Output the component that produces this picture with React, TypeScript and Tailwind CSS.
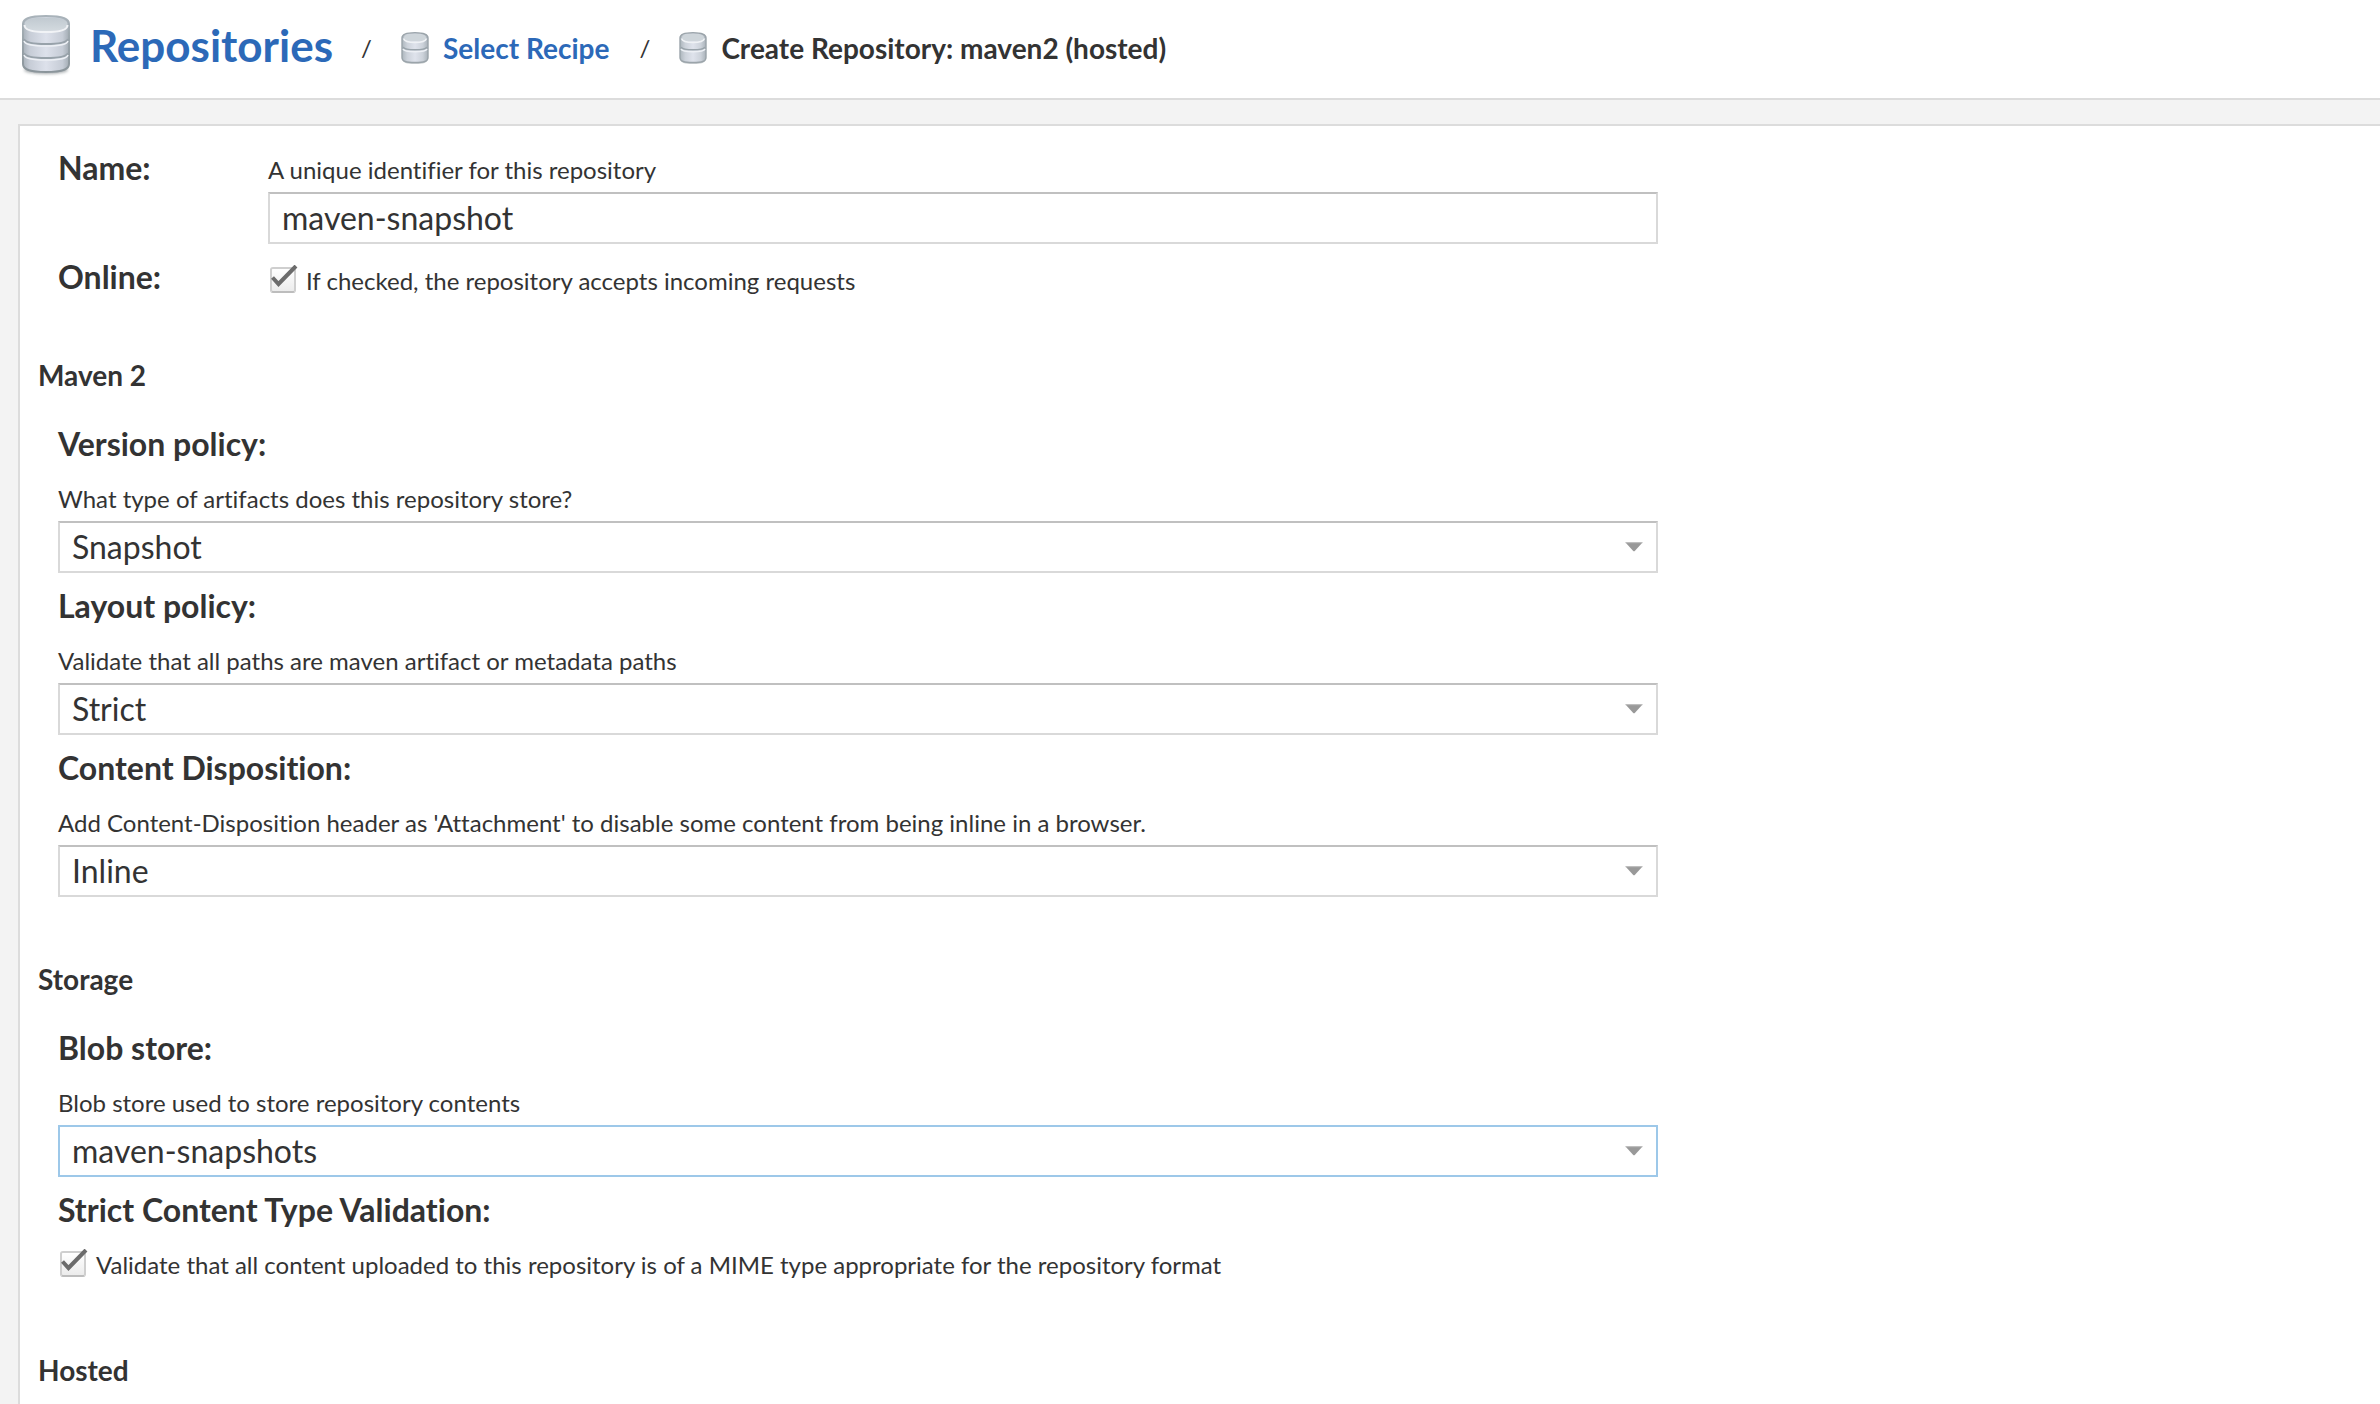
import React, { useState, type ReactNode } from "react";

function DatabaseLarge() {
  return (
    <svg viewBox="0 0 56 64" className="h-16 w-14 shrink-0" aria-hidden="true">
      <defs>
        <linearGradient id="dl-body" x1="0" x2="1" y1="0" y2="0">
          <stop offset="0" stopColor="#a9b2bb" />
          <stop offset="0.14" stopColor="#c6ccd6" />
          <stop offset="0.5" stopColor="#dde1eb" />
          <stop offset="0.86" stopColor="#c6ccd6" />
          <stop offset="1" stopColor="#a3acb4" />
        </linearGradient>
        <linearGradient id="dl-top" x1="0" x2="0" y1="0" y2="1">
          <stop offset="0" stopColor="#c0c9d0" />
          <stop offset="1" stopColor="#d3dadf" />
        </linearGradient>
        <linearGradient id="dl-edge" x1="0" x2="0" y1="0" y2="1">
          <stop offset="0" stopColor="#a9b3ba" />
          <stop offset="1" stopColor="#8b959b" />
        </linearGradient>
        <filter id="dl-blur" x="-20%" y="-100%" width="140%" height="300%">
          <feGaussianBlur stdDeviation="1.5" />
        </filter>
      </defs>
      <ellipse cx="28" cy="57" rx="22" ry="4" fill="#6f777c" opacity="0.6" filter="url(#dl-blur)" />
      <path d="M5 11c0-5 5-8 23-8s23 3 23 8v40c0 5-5 8-23 8S5 56 5 51z" fill="url(#dl-body)" stroke="url(#dl-edge)" strokeWidth="2" />
      <path d="M6.500 11c0-4 6-6.500 21.500-6.500S49.500 7 49.500 11s-6 7-21.500 7S6.500 15 6.500 11z" fill="url(#dl-top)" />
      <path d="M6.500 12c0 4.500 8 7 21.500 7s21.500-2.500 21.500-7" fill="none" stroke="#f1f3f6" strokeWidth="2" />
      <path d="M6 26c1 3.500 9 5 22 5s21-1.500 22-5M6 40c1 3.500 9 5 22 5s21-1.500 22-5" fill="none" stroke="#98a2aa" strokeWidth="2" />
      <path d="M6 28c1 3.500 9 5 22 5s21-1.500 22-5M6 42c1 3.500 9 5 22 5s21-1.500 22-5" fill="none" stroke="#edf0f5" strokeWidth="1.500" />
    </svg>
  );
}

function DatabaseSmall() {
  return (
    <svg viewBox="0 0 32 32" className="h-8 w-8 shrink-0" aria-hidden="true">
      <defs>
        <linearGradient id="ds-body" x1="0" x2="1" y1="0" y2="0">
          <stop offset="0" stopColor="#adb6bd" />
          <stop offset="0.2" stopColor="#ccd2da" />
          <stop offset="0.5" stopColor="#dfe3ec" />
          <stop offset="0.8" stopColor="#ccd2da" />
          <stop offset="1" stopColor="#a9b2b9" />
        </linearGradient>
      </defs>
      <path d="M3 26c0 5 5 6 13 6s13-1 13-6z" fill="#9aa3a8" opacity="0.5" />
      <path d="M3 6c0-4 4-5.300 13-5.300S29 2 29 6v19.500c0 4-4 5-13 5s-13-1-13-5z" fill="url(#ds-body)" stroke="#9ba4aa" strokeWidth="1.400" />
      <path d="M5 5.500C5 3 9 2 16 2s11 1 11 3.500S23 9 16 9 5 8 5 5.500z" fill="#ced5da" />
      <path d="M4.500 6.500C5.500 9.500 10 10.500 16 10.500s10.500-1 11.500-4" fill="none" stroke="#eff2f5" strokeWidth="1.600" />
      <path d="M4 15c1 2 6 2.800 12 2.800s11-.8 12-2.800" fill="none" stroke="#99a3aa" strokeWidth="1.600" />
      <path d="M4 17c1 2 6 2.800 12 2.800s11-.8 12-2.800" fill="none" stroke="#edf0f5" strokeWidth="1.600" />
    </svg>
  );
}

function Separator() {
  return <span className="w-2 text-2xl leading-8" aria-hidden="true">/</span>;
}

const labelClass = "text-[32px] leading-[42px] font-bold";
const helpClass = "text-2xl leading-8";
const boxClass =
  "block h-[52px] w-full rounded-none border-2 bg-white px-3 text-[32px] outline-none";
const restBorder = "border-[#d9d9d9] border-t-[#c0c0c0]";
const activeBorder = "border-[#9dc8e9]";

type SelectFieldProps = {
  id: string;
  label: string;
  help: string;
  options: string[];
  active?: boolean;
};

function SelectField({ id, label, help, options, active = false }: SelectFieldProps) {
  const [value, setValue] = useState(options[0]);
  return (
    <div>
      <label htmlFor={id} className={`block ${labelClass}`}>{label}</label>
      <p id={`${id}-help`} className={`mt-[18px] ${helpClass}`}>{help}</p>
      <div className="relative mt-1.5">
        <select
          id={id}
          aria-describedby={`${id}-help`}
          value={value}
          onChange={(e) => setValue(e.target.value)}
          className={`appearance-none ${boxClass} leading-[44px] ${active ? activeBorder : restBorder}`}
        >
          {options.map((o) => (
            <option key={o}>{o}</option>
          ))}
        </select>
        <svg viewBox="0 0 18 10" className="pointer-events-none absolute top-[21px] right-[15px] h-2.5 w-[18px]" aria-hidden="true">
          <path d="M0.500 0.500h17L10 8.800q-1 1-2 0z" fill="#999" />
          <path d="M0.500 0.700h17" stroke="#bbb" strokeWidth="1" />
        </svg>
      </div>
    </div>
  );
}

function CheckField({ id, children }: { id: string; children: ReactNode }) {
  const [checked, setChecked] = useState(true);
  return (
    <div className="flex items-start gap-2">
      <span className="relative block h-[30px] w-[30px] shrink-0">
        <input
          id={id}
          type="checkbox"
          checked={checked}
          onChange={(e) => setChecked(e.target.checked)}
          className="mt-0.5 ml-0.5 block size-[26px] appearance-none rounded-[3px] border-2 border-[#cfcfcf] border-b-[#bdbdbd] bg-linear-to-b from-white to-[#ececec]"
        />
        {checked && (
          <svg viewBox="0 0 30 30" className="pointer-events-none absolute inset-0 size-[30px]" aria-hidden="true">
            <path d="M4.500 12.500l6 6.500L28 1" fill="none" stroke="#6c6c6c" strokeWidth="4" />
          </svg>
        )}
      </span>
      <label htmlFor={id} className={helpClass}>{children}</label>
    </div>
  );
}

function SectionTitle({ children }: { children: ReactNode }) {
  return <h2 className="text-[28px] leading-[38px] font-bold">{children}</h2>;
}

export default function App() {
  const [name, setName] = useState("maven-snapshot");
  return (
    <div className="flex min-h-screen flex-col bg-[#f3f3f3] font-['Lato',sans-serif] text-[#333] [font-variant-ligatures:none]">
      <header className="border-b-2 border-[#dcdcdc] bg-white">
        <nav aria-label="Breadcrumb" className="flex h-[98px] items-center pb-2 pl-[18px]">
          <a href="#repositories" className="flex items-center gap-4 text-[#2c69b8]">
            <DatabaseLarge />
            <span className="text-[44px] leading-[54px] font-bold">Repositories</span>
          </a>
          <div className="flex items-center gap-[30px] pt-1.5 pl-7">
            <Separator />
            <a href="#recipe" className="flex items-center gap-3 text-[28px] leading-8 font-bold text-[#2c69b8]">
              <DatabaseSmall />
              Select Recipe
            </a>
            <Separator />
            <h1 className="flex items-center gap-3 text-[28px] leading-8 font-bold">
              <DatabaseSmall />
              Create Repository: maven2 (hosted)
            </h1>
          </div>
        </nav>
      </header>

      <main className="mt-6 ml-[18px] flex-1 border-t-2 border-l-2 border-[#dcdcdc] bg-white pt-[21px] pl-[18px]">
        <form className="max-w-[1620px]" onSubmit={(e) => e.preventDefault()}>
          <div className="grid grid-cols-[210px_1fr] gap-y-3 pl-5">
            <label htmlFor="name" className={labelClass}>Name:</label>
            <div className="pt-[7px]">
              <p id="name-help" className={helpClass}>A unique identifier for this repository</p>
              <input
                id="name"
                type="text"
                aria-describedby="name-help"
                value={name}
                onChange={(e) => setName(e.target.value)}
                className={`mt-1.5 ${boxClass} pb-0.5 leading-[42px] ${restBorder}`}
              />
            </div>
            <span className={labelClass}>Online:</span>
            <div className="pt-[9px]">
              <CheckField id="online">If checked, the repository accepts incoming requests</CheckField>
            </div>
          </div>

          <section className="mt-[58px]">
            <SectionTitle>Maven 2</SectionTitle>
            <div className="mt-[29px] flex flex-col gap-3 pl-5">
              <SelectField id="version" label="Version policy:" help="What type of artifacts does this repository store?" options={["Snapshot", "Release", "Mixed"]} />
              <SelectField id="layout" label="Layout policy:" help="Validate that all paths are maven artifact or metadata paths" options={["Strict", "Permissive"]} />
              <SelectField id="disposition" label="Content Disposition:" help="Add Content-Disposition header as 'Attachment' to disable some content from being inline in a browser." options={["Inline", "Attachment"]} />
            </div>
          </section>

          <section className="mt-[63px]">
            <SectionTitle>Storage</SectionTitle>
            <div className="mt-[29px] flex flex-col gap-3 pl-5">
              <SelectField id="blob" label="Blob store:" help="Blob store used to store repository contents" options={["maven-snapshots", "default"]} active />
              <div>
                <div className={labelClass}>Strict Content Type Validation:</div>
                <div className="mt-[18px]">
                  <CheckField id="strict">Validate that all content uploaded to this repository is of a MIME type appropriate for the repository format</CheckField>
                </div>
              </div>
            </div>
          </section>

          <section className="mt-[70px]">
            <SectionTitle>Hosted</SectionTitle>
          </section>
        </form>
      </main>
    </div>
  );
}
